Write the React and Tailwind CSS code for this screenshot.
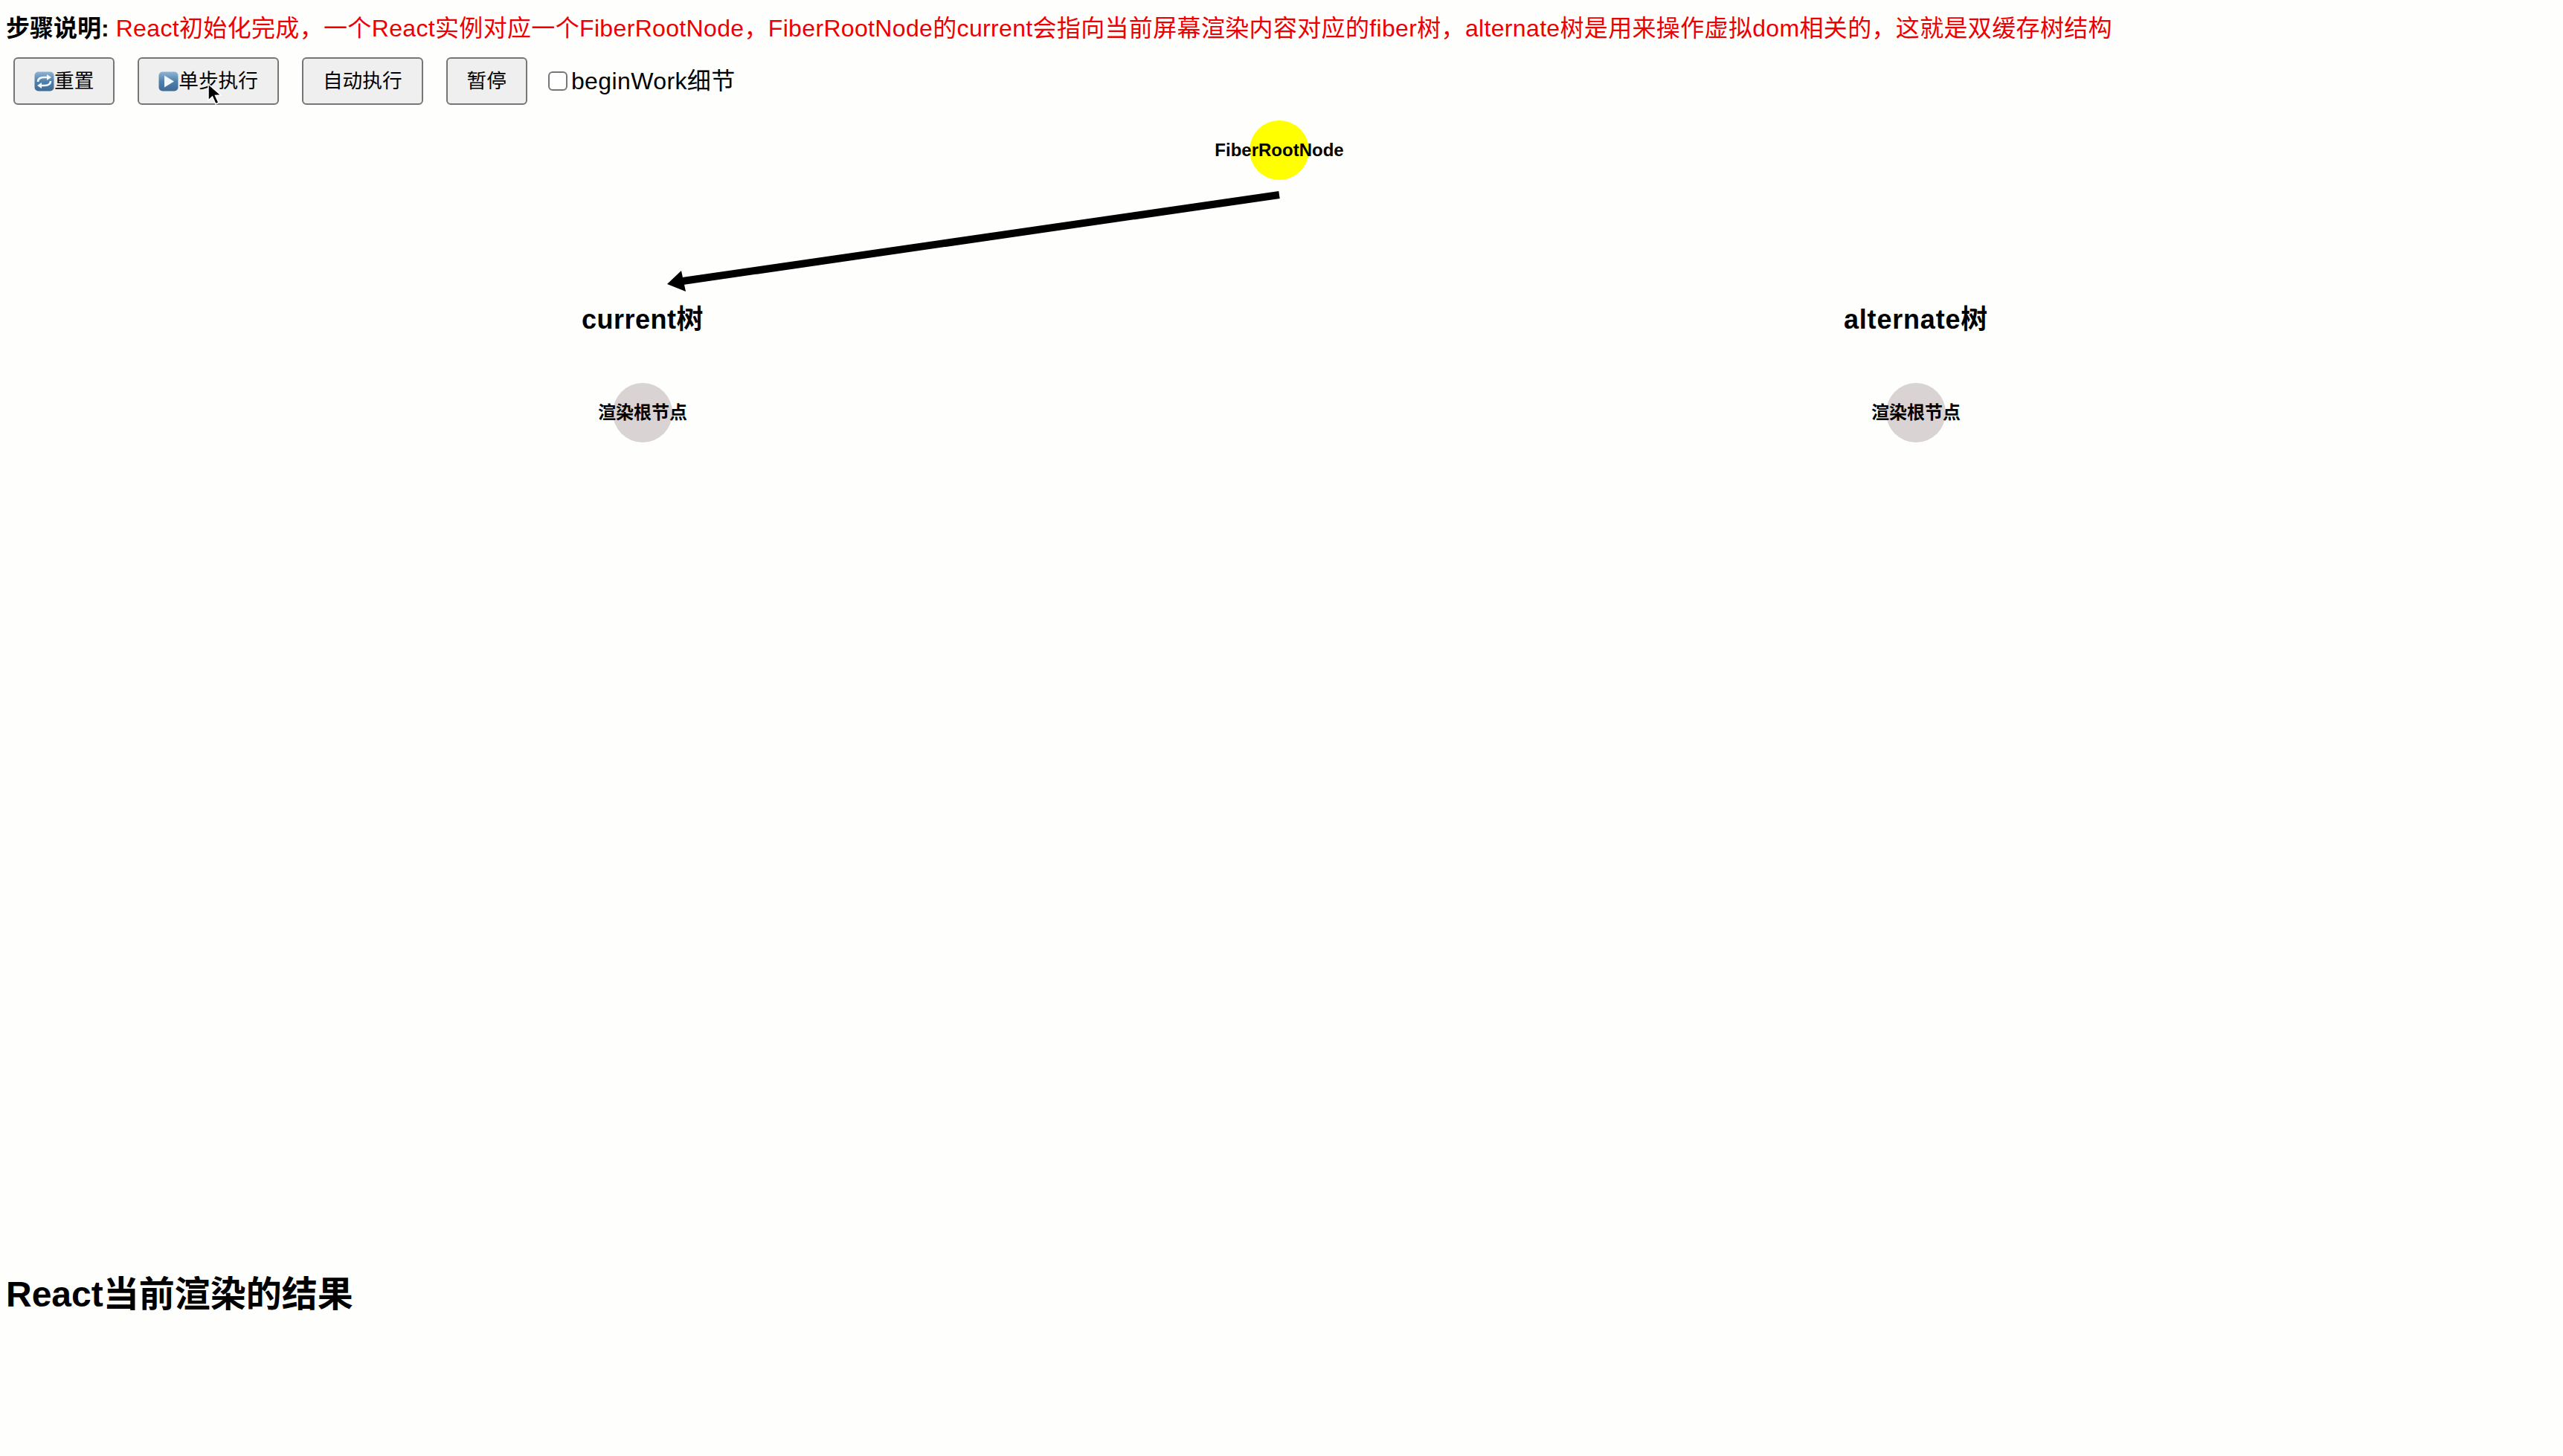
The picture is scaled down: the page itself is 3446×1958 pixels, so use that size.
const steps = [
  { label: "重置", icon: "reset" },
  { label: "单步执行", icon: "play" },
  { label: "自动执行" },
  { label: "暂停" },
]

function ButtonIcon({ type }) {
  return (
    <svg width="27" height="27" viewBox="0 0 27 27" className="shrink-0">
      <defs>
        <linearGradient id={`face-${type}`} x1="0" y1="0" x2="0" y2="1">
          <stop offset="0" stopColor="#8fb4d4" />
          <stop offset="0.5" stopColor="#4f80ac" />
          <stop offset="1" stopColor="#3f6a94" />
        </linearGradient>
      </defs>
      <rect x="0.5" y="0.5" width="26" height="26" rx="5" fill={`url(#face-${type})`} />
      {type === "play" ? (
        <path d="M8 5.5 L21 13.5 L8 21.5 Z" fill="#f4f8fb" />
      ) : (
        <g fill="none" stroke="#f4f8fb" strokeWidth="2.6">
          <path d="M5 14 C5 9.5 9 8 13 8 L18 8" />
          <path d="M22 13 C22 17.5 18 19 14 19 L9 19" />
          <path d="M17 4 L23 8 L17 12 Z" fill="#f4f8fb" stroke="none" />
          <path d="M10 15 L4 19 L10 23 Z" fill="#f4f8fb" stroke="none" />
        </g>
      )}
    </svg>
  )
}

function Node({ label, className, circle }) {
  return (
    <div className={`absolute flex h-[80px] w-[240px] items-center justify-center ${className}`}>
      <div className={`absolute h-[80px] w-[80px] rounded-full ${circle}`} />
      <span className="relative whitespace-nowrap text-[24px] font-bold leading-none text-black">{label}</span>
    </div>
  )
}

export default function App() {
  return (
    <div className="flex h-[1958px] w-[3446px] flex-col overflow-hidden bg-[#fefefd] font-['Liberation_Sans','Noto_Sans_CJK_SC',sans-serif] text-black">
      {/* Step description */}
      <div className="flex h-[77px] items-start whitespace-nowrap pl-[8px] pt-[20px] text-[32px] leading-[36px]">
        <span className="font-bold">步骤说明:</span>
        <span className="ml-[9px] tracking-[0.34px] text-[#ee0000]">
          React初始化完成，一个React实例对应一个FiberRootNode，FiberRootNode的current会指向当前屏幕渲染内容对应的fiber树，alternate树是用来操作虚拟dom相关的，这就是双缓存树结构
        </span>
      </div>

      {/* Controls */}
      <div className="relative flex h-[64px] items-center gap-[31px] pl-[18px]">
        {steps.map((step) => (
          <button
            key={step.label}
            className="flex h-[64px] items-center rounded-[6px] border-2 border-[#767676] bg-[#efefef] px-[26px] text-[26.67px] leading-none text-black"
          >
            {step.icon && <ButtonIcon type={step.icon} />}
            {step.label}
          </button>
        ))}
        <label className="-ml-[3px] flex items-center text-[32px] leading-none">
          <input type="checkbox" className="m-0 h-[26px] w-[26px] appearance-none rounded-[6px] border-2 border-[#767676] bg-white" readOnly />
          <span className="ml-[5px] tracking-[0.4px]">beginWork细节</span>
        </label>
        {/* Mouse pointer */}
        <svg width="24" height="32" viewBox="0 0 24 32" className="absolute left-[277px] top-[34px]">
          <path d="M3 2 L3 24 L8.5 19 L13 29 L17 27 L12.5 17.5 L20 17 Z" fill="#000" stroke="#fff" strokeWidth="1.5" />
        </svg>
      </div>

      {/* Fiber diagram */}
      <div className="relative h-[1568px] shrink-0">
        <Node label="FiberRootNode" className="left-[1600px] top-[21px]" circle="bg-[#ffff00]" />

        <svg width="3446" height="400" className="absolute left-0 top-[-141px]">
          <line x1="1720" y1="262" x2="918" y2="378" stroke="#000" strokeWidth="10" />
          <path d="M897 382 L916 364 L922 392 Z" fill="#000" />
        </svg>

        <div className="absolute left-[782px] top-[268px] whitespace-nowrap text-[36px] font-bold leading-[42px] tracking-[0.5px]">current树</div>
        <div className="absolute left-[2479px] top-[268px] whitespace-nowrap text-[36px] font-bold leading-[42px] tracking-[0.8px]">alternate树</div>

        <Node label="渲染根节点" className="left-[744px] top-[374px]" circle="bg-[#d9d3d3]" />
        <Node label="渲染根节点" className="left-[2456px] top-[374px]" circle="bg-[#d9d3d3]" />
      </div>

      {/* Result */}
      <h2 className="pl-[8px] pt-[4px] text-[48px] font-bold leading-[56px]">React当前渲染的结果</h2>
    </div>
  )
}
